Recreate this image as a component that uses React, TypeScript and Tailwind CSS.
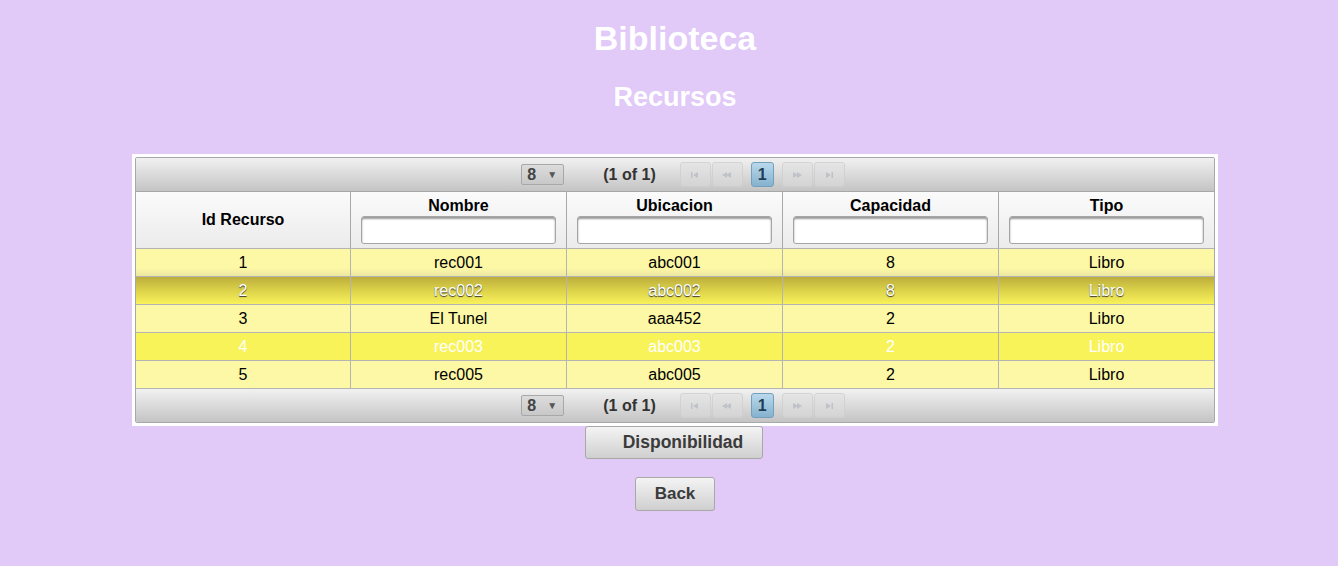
import React from "react";

const COLS = ["Id Recurso", "Nombre", "Ubicacion", "Capacidad", "Tipo"];

type Row = { id: string; nombre: string; ubicacion: string; capacidad: string; tipo: string };

const ROWS: Row[] = [
  { id: "1", nombre: "rec001", ubicacion: "abc001", capacidad: "8", tipo: "Libro" },
  { id: "2", nombre: "rec002", ubicacion: "abc002", capacidad: "8", tipo: "Libro" },
  { id: "3", nombre: "El Tunel", ubicacion: "aaa452", capacidad: "2", tipo: "Libro" },
  { id: "4", nombre: "rec003", ubicacion: "abc003", capacidad: "2", tipo: "Libro" },
  { id: "5", nombre: "rec005", ubicacion: "abc005", capacidad: "2", tipo: "Libro" },
];

const rowCls = [
  "bg-[linear-gradient(#fdf8a6_0%,#fdf8a6_70%,#ece7a0_100%)] text-black",
  "bg-[linear-gradient(#bcad3c_0%,#d9cf48_45%,#f8f25a_100%)] text-white [text-shadow:0_1px_1px_#333]",
  "bg-[#fdf8a6] text-black",
  "bg-[#f9f35a] text-white",
  "bg-[#fdf8a6] text-black",
];

function NavIcon({ kind }: { kind: "first" | "prev" | "next" | "last" }) {
  const c = "#b9bec4";
  return (
    <svg width="12" height="8" viewBox="0 0 12 8">
      {kind === "first" && (
        <>
          <rect x="2" y="1" width="1.5" height="6" fill={c} />
          <path d="M4 4 L9 1 L9 7 Z" fill={c} />
        </>
      )}
      {kind === "prev" && (
        <>
          <path d="M1 4 L6 1 L6 7 Z" fill={c} />
          <path d="M5 4 L10 1 L10 7 Z" fill={c} />
        </>
      )}
      {kind === "next" && (
        <>
          <path d="M2 1 L7 4 L2 7 Z" fill={c} />
          <path d="M6 1 L11 4 L6 7 Z" fill={c} />
        </>
      )}
      {kind === "last" && (
        <>
          <path d="M3 1 L8 4 L3 7 Z" fill={c} />
          <rect x="8.5" y="1" width="1.5" height="6" fill={c} />
        </>
      )}
    </svg>
  );
}

function NavBtn({ kind }: { kind: "first" | "prev" | "next" | "last" }) {
  return (
    <span className="w-[31px] h-[25px] flex items-center justify-center rounded-[3px] border border-[#cfcfcf] bg-[linear-gradient(#e4e4e4,#d6d6d6)] opacity-80">
      <NavIcon kind={kind} />
    </span>
  );
}

function Paginator() {
  return (
    <div className="h-[33px] flex items-center justify-center bg-[linear-gradient(#f1f1f1,#c4c4c4)] font-bold text-[16px] text-[#333]">
      <div className="flex items-center pl-[16px]">
        <span className="w-[43px] h-[21px] flex items-center justify-between pl-[5px] pr-[6px] border border-[#a8a8a8] rounded-[2px] bg-[linear-gradient(#dcdcdc,#c8c8c8)] text-[#444]">
          <span className="leading-none">8</span>
          <span className="text-[10px] text-[#555] leading-none">▼</span>
        </span>
        <span className="ml-[39px] mr-[24px] text-[#333]">(1 of 1)</span>
        <div className="flex items-center gap-[1px]">
          <NavBtn kind="first" />
          <NavBtn kind="prev" />
        </div>
        <span className="mx-[8px] w-[23px] h-[25px] flex items-center justify-center rounded-[3px] border border-[#74a0bd] bg-[linear-gradient(#b9d8ec,#85b2cf)] text-[#1f3f55] text-[16px] font-bold">
          1
        </span>
        <div className="flex items-center gap-[1px]">
          <NavBtn kind="next" />
          <NavBtn kind="last" />
        </div>
      </div>
    </div>
  );
}

function FilterInput() {
  return (
    <div className="mx-[10px] mt-[1px] h-[28px] rounded-[3px] border border-[#a5a5a5] bg-white shadow-[inset_0_2px_2px_#9a9a9a]" />
  );
}

export default function App() {
  return (
    <div
      className="min-h-[566px] w-full bg-[#e1c9f8] flex flex-col items-center pl-[12px]"
      style={{ fontFamily: '"Liberation Sans", Arial, sans-serif' }}
    >
      <h1 className="mt-[19px] text-[34px] font-bold text-white leading-[38px]">Biblioteca</h1>
      <h2 className="mt-[23px] text-[27px] font-bold text-white leading-[34px]">Recursos</h2>

      <div className="mt-[40px] w-[1086px] bg-white p-[3px]">
        <div className="border border-[#a8a8a8] rounded-[2px] overflow-hidden">
          <Paginator />
          <div className="grid grid-cols-[214px_repeat(4,1fr)] border-t border-[#a8a8a8] bg-[linear-gradient(#fbfbfb,#ebebeb)] text-[16px] font-bold text-black">
            {COLS.map((c, i) => (
              <div
                key={c}
                className={`h-[56px] flex flex-col justify-center ${i > 0 ? "border-l border-[#a8a8a8]" : ""}`}
              >
                {i === 0 ? (
                  <div className="text-center">{c}</div>
                ) : (
                  <>
                    <div className="text-center leading-[18px] mt-[1px]">{c}</div>
                    <FilterInput />
                  </>
                )}
              </div>
            ))}
          </div>
          {ROWS.map((r, ri) => (
            <div
              key={r.id}
              className={`grid grid-cols-[214px_repeat(4,1fr)] border-t border-[#b4b4b4] text-[16px] ${rowCls[ri]}`}
            >
              {[r.id, r.nombre, r.ubicacion, r.capacidad, r.tipo].map((v, ci) => (
                <div
                  key={ci}
                  className={`h-[27px] flex items-center justify-center ${ci > 0 ? "border-l border-[#b4b4b4]" : ""}`}
                >
                  {v}
                </div>
              ))}
            </div>
          ))}
          <div className="border-t border-[#b4b4b4]">
            <Paginator />
          </div>
        </div>
      </div>

      <button className="mr-[2px] w-[178px] h-[33px] pl-[18px] rounded-[3px] border border-[#a8a8a8] bg-[linear-gradient(#f4f4f4,#cfcfcf)] text-[17.5px] font-bold text-[#3b3b3b]">
        Disponibilidad
      </button>
      <button className="mt-[18px] w-[80px] h-[34px] rounded-[3px] border border-[#a8a8a8] bg-[linear-gradient(#f4f4f4,#cfcfcf)] text-[17px] font-bold text-[#3b3b3b]">
        Back
      </button>
    </div>
  );
}
